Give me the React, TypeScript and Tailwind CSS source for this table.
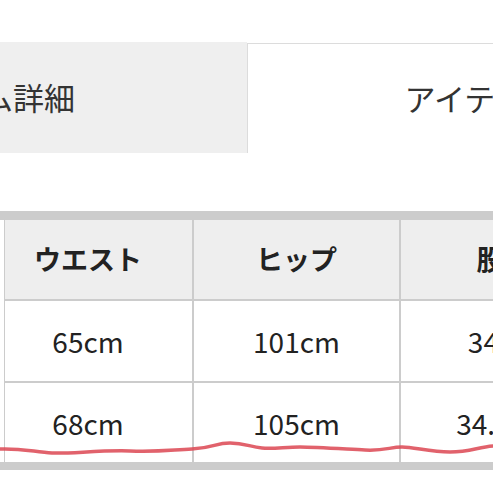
import React from "react";

const rows = [
  ["65cm", "101cm", "34cm"],
  ["68cm", "105cm", "34.5cm"],
];

export default function App() {
  return (
    <div
      className="relative w-[493px] h-[493px] overflow-hidden bg-white text-[#222]"
      style={{ fontFamily: '"Noto Sans CJK JP", "Noto Sans", sans-serif' }}
    >
      <div className="pt-[42px]">
        <div className="flex -ml-[280px] w-[1060px]">
          <div className="w-[527px] h-[111px] bg-[#efefef] flex items-center justify-center text-[31px] text-[#333]">
            アイテム詳細
          </div>
          <div className="w-[527px] h-[110px] mt-[1px] bg-white border-l border-t border-[#dcdcdc] flex items-center justify-center text-[31px] text-[#333]">
            アイテムサイズ
          </div>
        </div>
      </div>

      <div className="mt-[58px] w-[700px] border-t-[9px] border-b-[8px] border-[#cccccc]">
        <div className="ml-[4px] border-l border-[#cccccc]">
          <div className="flex h-[81px] bg-[#eeeeee] border-b-2 border-[#cccccc] text-[27px] font-bold">
            <div className="w-[189px] pr-[21px] border-r-2 border-[#cccccc] flex items-center justify-center">ウエスト</div>
            <div className="w-[207px] border-r-2 border-[#cccccc] flex items-center justify-center">ヒップ</div>
            <div className="w-[207px] border-r-2 border-[#cccccc] flex items-center justify-center">股下</div>
          </div>
          {rows.map((r, i) => (
            <div
              key={i}
              className={
                i === 0
                  ? "flex h-[82px] border-b-2 border-[#cccccc] text-[28px]"
                  : "flex h-[79px] text-[28px]"
              }
            >
              <div className="w-[189px] pr-[21px] border-r-2 border-[#cccccc] flex items-center justify-center">{r[0]}</div>
              <div className="w-[207px] border-r-2 border-[#cccccc] flex items-center justify-center">{r[1]}</div>
              <div className="w-[207px] border-r-2 border-[#cccccc] flex items-center justify-center">{r[2]}</div>
            </div>
          ))}
        </div>
      </div>

      {/* hand drawn red underline */}
      <svg className="absolute left-0 top-0 pointer-events-none" width="493" height="493">
        <path
          d="M0 449 C 20 448, 35 452, 52 453 S 100 450, 130 451 S 170 450, 192 449 S 215 443, 230 443 S 250 447, 262 448 S 285 447, 300 447 S 345 449, 365 450 S 390 447, 402 447 S 430 452, 450 452 S 478 447, 493 446"
          fill="none"
          stroke="#dc4652"
          strokeOpacity="0.85"
          strokeWidth="3.5"
          strokeLinecap="round"
        />
      </svg>
    </div>
  );
}
